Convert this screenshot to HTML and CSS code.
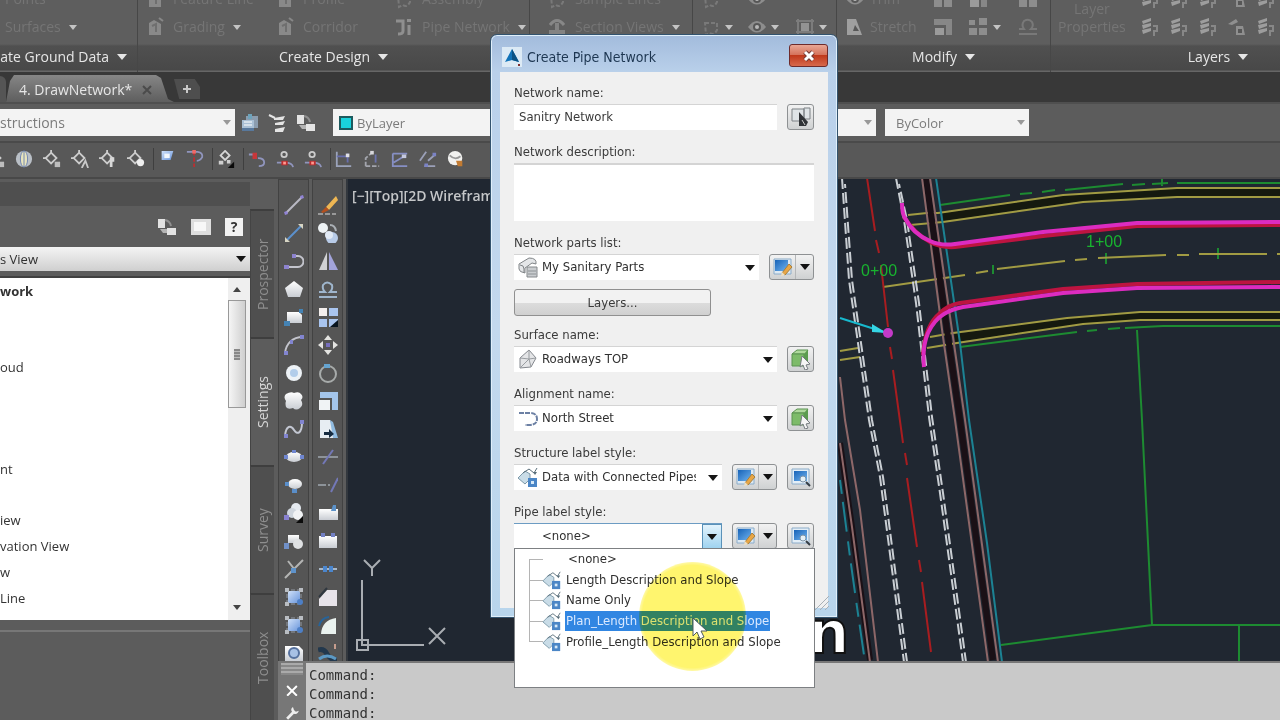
FILE: index.html
```html
<!DOCTYPE html>
<html lang="en">
<head>
<meta charset="utf-8">
<title>Create Pipe Network</title>
<link rel="stylesheet" href="styles.css">
</head>
<body>
<svg class="sprite" aria-hidden="true">
  <defs>
    <linearGradient id="pale" x1="0" y1="0" x2="0" y2="1"><stop offset="0" stop-color="#fff"/><stop offset="1" stop-color="#c9cdd3"/></linearGradient>
    <linearGradient id="sky" x1="0" y1="0" x2="1" y2="1"><stop offset="0" stop-color="#cfe0f8"/><stop offset="1" stop-color="#6a96dc"/></linearGradient>
    <linearGradient id="deep" x1="0" y1="0" x2="1" y2="1"><stop offset="0" stop-color="#1763b8"/><stop offset="1" stop-color="#6fb2ee"/></linearGradient>
  </defs>
  <symbol id="caret" viewBox="0 0 10 6"><path d="M0 0h10L5 6z" fill="currentColor"/></symbol>
  <symbol id="line" viewBox="0 0 20 20"><path d="M2 18 18 2" stroke="#b9b9c4" stroke-width="2"/><path d="M0 17l3-1 1 3-3 1zM16 1l3-1 1 3-3 1z" fill="#9184d6"/></symbol>
  <symbol id="xline" viewBox="0 0 20 20"><path d="M3 17 17 3" stroke="#5b91cd" stroke-width="2"/><path d="M1 14v5h5zM19 6V1h-5z" fill="#d7d5c4"/></symbol>
  <symbol id="pline" viewBox="0 0 20 20"><path d="M1 16h13a5 5 0 0 0 0-11h-3" fill="none" stroke="#c3c4cc" stroke-width="2"/><path d="M0 14h5v4H0zM8 3h4v4H8z" fill="#8d83cf"/></symbol>
  <symbol id="polygon" viewBox="0 0 20 20"><path d="M10 2l9 7-3 9H4L1 9z" fill="url(#pale)"/></symbol>
  <symbol id="rect" viewBox="0 0 20 20"><path d="M3 5h12l3 3v8H3z" fill="url(#pale)"/><path d="M0 14h6v5H0zM15 2h4v4h-4z" fill="#4583b4"/></symbol>
  <symbol id="arc" viewBox="0 0 20 20"><path d="M1 18C2 9 8 2 19 2" fill="none" stroke="#c3c4cc" stroke-width="2"/><path d="M0 16h4v4H0zM16 0h4v4h-4zM6 5h3v4H6z" fill="#8285d0"/></symbol>
  <symbol id="circle" viewBox="0 0 20 20"><circle cx="10" cy="10" r="8" fill="#edf2f6"/><circle cx="10" cy="10" r="4" fill="#b2cdea"/></symbol>
  <symbol id="cloud" viewBox="0 0 20 20"><path d="M2 3q5-3 8-1 5-2 7 1 3 3 0 6 3 5-1 8-4 3-7 0-5 2-7-1-1-4 0-6-3-4 0-7z" fill="url(#pale)"/></symbol>
  <symbol id="spline" viewBox="0 0 20 20"><path d="M1 17C2 6 7 6 10 11s8 4 8-8" fill="none" stroke="#c3c7d2" stroke-width="2"/><path d="M0 15h4v4H0zM16 1h4v4h-4z" fill="#8285d0"/></symbol>
  <symbol id="ellipse" viewBox="0 0 20 20"><ellipse cx="10" cy="10" rx="8" ry="5" fill="url(#pale)"/><path d="M0 8h4v4H0zM16 8h4v4h-4zM8 3h4v3H8z" fill="#6f86d0"/></symbol>
  <symbol id="earc" viewBox="0 0 20 20"><ellipse cx="11" cy="9" rx="7" ry="5" fill="url(#pale)"/><path d="M1 7h4v4H1zM8 14h5v4H8z" fill="#5a8ec9"/></symbol>
  <symbol id="insert" viewBox="0 0 20 20"><circle cx="12" cy="5" r="5" fill="#e4e9ef"/><circle cx="8" cy="10" r="5" fill="#cfd6de"/><circle cx="14" cy="12" r="5" fill="#f1f3f5"/><path d="M0 12h5v5H0z" fill="#8780d0"/><path d="M19 13v7h-7z" fill="#0b0b0b"/></symbol>
  <symbol id="block" viewBox="0 0 20 20"><path d="M4 4h11v8H4z" fill="url(#pale)"/><circle cx="14" cy="13" r="5" fill="#dfe1e3"/><path d="M0 12h5v6H0z" fill="#7090c8"/></symbol>
  <symbol id="point" viewBox="0 0 20 20"><path d="M1 19 19 1M4 2l7 9" stroke="#b4b5b4" stroke-width="2"/><path d="M7 9h5v5H7z" fill="#5e93cb"/></symbol>
  <symbol id="hatch" viewBox="0 0 20 20"><path d="M4 4h12v12H4z" fill="url(#sky)"/><path d="M3 1v18M17 1v18M1 3h18M1 17h18" stroke="#9299a3" stroke-width="1" stroke-dasharray="4 2"/><path d="M1 1h4v4H1zM15 1h4v4h-4zM1 15h4v4H1z" fill="#b9bdc2"/><circle cx="16" cy="15" r="3" fill="#4d7fc6"/></symbol>
  <symbol id="region" viewBox="0 0 20 20"><path d="M1 3h14l4 4v11H1z" fill="url(#pale)"/><circle cx="10" cy="10" r="5" fill="#a8c1e5" stroke="#56719e" stroke-width="2"/></symbol>
  <symbol id="pencil" viewBox="0 0 20 20"><path d="M8 12 18 1l2 4-9 10z" fill="#efb753"/><path d="M8 12l3 3-6 3-2-1z" fill="#b4501e"/><path d="M0 19h18" stroke="#999" stroke-width="2" stroke-dasharray="5 2"/></symbol>
  <symbol id="copy" viewBox="0 0 20 20"><circle cx="5" cy="5" r="5" fill="#eef2f4"/><circle cx="14" cy="15" r="6" fill="#b8cbe7"/><circle cx="11" cy="12" r="4" fill="#e1e9f4"/><path d="M12 2q5 0 6 6" fill="none" stroke="#abb0b5" stroke-width="2"/></symbol>
  <symbol id="mirror" viewBox="0 0 20 20"><path d="M9 1v18H1z" fill="#d1d2d4"/><path d="M11 1v18h9z" fill="#a3a4da"/></symbol>
  <symbol id="offset" viewBox="0 0 20 20"><path d="M1 13h6Q4 10 5 6q4-5 9 0 1 4-2 7h7M1 18h18" fill="none" stroke="#9fb6cd" stroke-width="2"/></symbol>
  <symbol id="array" viewBox="0 0 20 20"><path d="M1 1h8v8H1z" fill="#f4efed"/><path d="M11 1h9v8h-9zM1 12h8v8H1zM11 12h9v8h-9z" fill="#a9c5ef"/><path d="M20 13v7h-8z" fill="#091520"/></symbol>
  <symbol id="move" viewBox="0 0 20 20"><path d="M10 0l4 5H6zM10 20l4-5H6zM0 10l5-4v8zM20 10l-5-4v8z" fill="#e4e4e1"/><path d="M8 8h4v4H8z" fill="#776fbd"/></symbol>
  <symbol id="rotate" viewBox="0 0 20 20"><circle cx="10" cy="11" r="8" fill="none" stroke="#a7abaa" stroke-width="2"/><path d="M6 1h6v4H6z" fill="#65a4d0"/></symbol>
  <symbol id="scale" viewBox="0 0 20 20"><path d="M2 1h18v18h-6V7H2z" fill="#a4c5ea"/><path d="M1 9h11v10H1z" fill="#f0f3f5"/></symbol>
  <symbol id="stretch" viewBox="0 0 20 20"><path d="M2 1h10l7 18H2z" fill="#e7edf2"/><path d="M12 1l3 2 5 16h-5z" fill="#91bce1"/><path d="M6 13h5v-3l5 5-5 4v-3H6z" fill="#162b40"/></symbol>
  <symbol id="trim" viewBox="0 0 20 20"><path d="M0 10h20" stroke="#8d9399" stroke-width="2"/><path d="M5 17 15 3" stroke="#7378b7" stroke-width="2"/></symbol>
  <symbol id="extend" viewBox="0 0 20 20"><path d="M0 10h12" stroke="#8d9399" stroke-width="2" stroke-dasharray="8 2"/><path d="M13 17 20 3" stroke="#7378b7" stroke-width="2"/></symbol>
  <symbol id="break1" viewBox="0 0 20 20"><path d="M1 6h19v11H1z" fill="url(#pale)"/><path d="M15 2h3v6h-5z" fill="#5c92c9"/></symbol>
  <symbol id="break2" viewBox="0 0 20 20"><path d="M1 5h18v12H1z" fill="url(#pale)"/><path d="M3 2h4v4H3zM13 2h4v4h-4z" fill="#7381c4"/></symbol>
  <symbol id="join" viewBox="0 0 20 20"><path d="M1 10h18" stroke="#a9b8c8" stroke-width="2"/><path d="M5 7h4v6H5zM11 7h4v6h-4z" fill="#4b86cd"/></symbol>
  <symbol id="chamfer" viewBox="0 0 20 20"><path d="M9 3h10v16H1v-7z" fill="#e7e3e9"/><path d="M1 10 9 1" stroke="#303840" stroke-width="2"/></symbol>
  <symbol id="fillet" viewBox="0 0 20 20"><path d="M18 3v16H3Q4 5 18 3z" fill="#eaf2ef"/><path d="M1 11Q3 3 11 2" fill="none" stroke="#27649a" stroke-width="2"/></symbol>
  <symbol id="blend" viewBox="0 0 20 20"><path d="M0 7q6-2 9 4t10 6" fill="none" stroke="#22384d" stroke-width="5"/><path d="M1 16q8-6 17 0" fill="none" stroke="#5c99c4" stroke-width="3"/><path d="M17 1v5" stroke="#c69d8d" stroke-width="2"/></symbol>
  <symbol id="diamond" viewBox="0 0 20 20"><path d="M9 3l6 6-6 6-6-6z" fill="none" stroke="#cdcdcd" stroke-width="2"/><path d="M9 0v3M0 9h3" stroke="#cdcdcd" stroke-width="2"/></symbol>
  <symbol id="dia-sq" viewBox="0 0 20 20"><use href="#diamond"/><path d="M13 13h6v6h-6z" fill="#bdbdbd"/></symbol>
  <symbol id="dia-a" viewBox="0 0 20 20"><use href="#diamond"/><path d="M12 20l4-8 3 8" fill="none" stroke="#c8c8c8" stroke-width="2"/></symbol>
  <symbol id="dia-x" viewBox="0 0 20 20"><use href="#diamond"/><path d="M12 8h5v5h-2v6h-3z" fill="#d8d8d8"/></symbol>
  <symbol id="dia-o" viewBox="0 0 20 20"><use href="#diamond"/><circle cx="15" cy="14" r="4" fill="#efefef"/></symbol>
  <symbol id="dia-k" viewBox="0 0 20 20"><path d="M9 1l5 5-5 5-5-5z" fill="none" stroke="#d6d6d6" stroke-width="2"/><path d="M2 12h5v4H2zM11 11h4v4h-4z" fill="#cfcfcf"/><path d="M19 13v7h-7z" fill="#090909"/></symbol>
  <symbol id="globe" viewBox="0 0 20 20"><circle cx="10" cy="10" r="9" fill="#b9bfc6"/><ellipse cx="10" cy="10" rx="4" ry="9" fill="#e8e4bd" stroke="#6a7fb0"/><path d="M10 1v18" stroke="#6a7fb0"/></symbol>
  <symbol id="flag" viewBox="0 0 20 20"><path d="M4 1h13l-3 10H4z" fill="url(#sky)"/><path d="M7 4h6v5H7z" fill="#f1f6fb"/></symbol>
  <symbol id="curve-r" viewBox="0 0 20 20"><path d="M1 2h12q6 1 5 6-2 4-6 4" fill="none" stroke="#9095bd" stroke-width="2"/><path d="M9 1v18" stroke="#ba2f32" stroke-width="2" stroke-dasharray="5 2"/><path d="M7 0h4v4H7z" fill="#f06a66"/></symbol>
  <symbol id="curve-s" viewBox="0 0 20 20"><path d="M1 5h8M11 9q7 0 7 5 0 4-6 4" fill="none" stroke="#9095bd" stroke-width="2"/><path d="M5 3h5v7H5z" fill="#c8373a"/></symbol>
  <symbol id="curve-o" viewBox="0 0 20 20"><circle cx="9" cy="5" r="3" fill="none" stroke="#ccc" stroke-width="2"/><path d="M1 14h9q8 0 9 5" fill="none" stroke="#9095bd" stroke-width="2"/><path d="M6 12h7v5H6z" fill="#b92e30"/><path d="M8 13h3v3H8z" fill="#ff9a90"/></symbol>
  <symbol id="axis" viewBox="0 0 20 20"><path d="M2 2v16h16" fill="none" stroke="#9ba3bb" stroke-width="2"/><path d="M2 7h12M14 4v10" stroke="#686fae" stroke-width="2"/><path d="M12 4h4v4h-4z" fill="#e1e1e6"/></symbol>
  <symbol id="axis2" viewBox="0 0 20 20"><path d="M3 18V9l8-7M3 18h15" fill="none" stroke="#a3a5ad" stroke-width="2" stroke-dasharray="5 2"/><path d="M14 5v9" stroke="#6b73ae" stroke-width="2"/><path d="M8 1h4v4H8z" fill="#d8d8dc"/></symbol>
  <symbol id="axis3" viewBox="0 0 20 20"><path d="M2 4v14h16M2 4h16M3 14 16 6" fill="none" stroke="#868fc4" stroke-width="2"/><path d="M12 5h5v4h-5z" fill="#c5c9df"/></symbol>
  <symbol id="axis4" viewBox="0 0 20 20"><path d="M1 12 8 2M6 18h12M10 12l8-7" fill="none" stroke="#9ba0b8" stroke-width="2"/><path d="M6 15h4v4H6zM15 3h4v4h-4z" fill="#7b83c5"/></symbol>
  <symbol id="ball" viewBox="0 0 20 20"><circle cx="9" cy="9" r="8" fill="#f1f1ef"/><path d="M3 6q6 6 12 1" fill="none" stroke="#999" stroke-width="2"/><path d="M10 12h7v6h-5z" fill="#c27b32"/></symbol>
  <symbol id="sheets" viewBox="0 0 20 20"><path d="M6 3h12v12H6z" fill="#8b9cae"/><path d="M2 7h12v11H2z" fill="#a9bfd4"/><path d="M4 9h8M4 12h8" stroke="#d5e0ea" stroke-width="2"/><path d="M2 15h12v3H2z" fill="#58789c"/><path d="M8 1h4v5H8z" fill="#6ea3bb"/></symbol>
  <symbol id="stack" viewBox="0 0 20 20"><path d="M6 5l11-2-2 4H6zM7 10l10-2-2 4H7zM7 16l10-2-2 5H7z" fill="currentColor"/><path d="M1 2l6 3" stroke="currentColor" stroke-width="2"/></symbol>
  <symbol id="stack2" viewBox="0 0 20 20"><path d="M1 2h7v9H1zM10 11h9v7h-9z" fill="currentColor"/><path d="M8 3q5 1 6 6" fill="none" stroke="#8f8f8f" stroke-width="2"/><path d="M3 12h7v4H6z" fill="#b4b4b4"/></symbol>
  <symbol id="grade" viewBox="0 0 20 20"><path d="M4 6l5-3 7 4v11H4z" fill="#9c9c9c"/><path d="M14 1l4 3" stroke="#999" stroke-width="2"/><path d="M7 9l4-2v8" fill="none" stroke="#777" stroke-width="2"/></symbol>
  <symbol id="pipes" viewBox="0 0 20 20"><path d="M2 4h7v10q0 3-5 3M15 8v10" fill="none" stroke="#a5a5a5" stroke-width="3"/><path d="M13 2h4v3h-4z" fill="#a5a5a5"/></symbol>
  <symbol id="views" viewBox="0 0 20 20"><path d="M3 8q7-9 14 0" fill="none" stroke="#999" stroke-width="3"/><path d="M2 13h16v5H2zM8 6h4v8H8z" fill="#939393"/></symbol>
  <symbol id="lasso" viewBox="0 0 20 20"><path d="M4 6h12v7q-3 6-7 3l-4 2z" fill="none" stroke="#858585" stroke-width="2" stroke-dasharray="4 2"/></symbol>
  <symbol id="eye" viewBox="0 0 20 20"><path d="M1 10q9-12 18 0-9 11-18 0z" fill="#a2a2a2"/><circle cx="10" cy="10" r="4" fill="#555"/><circle cx="10" cy="10" r="2" fill="#ddd"/></symbol>
  <symbol id="frame" viewBox="0 0 20 20"><path d="M3 2v15M17 2v15M1 4h18M1 15h18" stroke="#8a8a8a" stroke-width="2"/><path d="M6 6h8v8H6z" fill="#aaa"/></symbol>
  <symbol id="g-stretch" viewBox="0 0 20 20"><path d="M2 2h9l6 16H2z" fill="#bbb"/><path d="M10 8l4 6h-6z" fill="#555"/></symbol>
  <symbol id="g-scale" viewBox="0 0 20 20"><path d="M1 2h18v16h-6V8H1z" fill="#999"/><path d="M2 11h9v7H2z" fill="#b5b5b5"/></symbol>
  <symbol id="g-array" viewBox="0 0 20 20"><path d="M1 3h6v5H1zM11 1h8v7h-8zM1 11h8v7H1zM11 11h8v7h-8z" fill="#a2a2a2"/></symbol>
  <symbol id="g-offset" viewBox="0 0 20 20"><path d="M1 12h5Q3 8 6 4q5-3 8 1 2 4-1 7h6M1 17h18" fill="none" stroke="#858585" stroke-width="2"/></symbol>
  <symbol id="g-layer" viewBox="0 0 20 20"><path d="M2 4l9-3v3L3 7zM2 8l9-2v3l-8 3zM2 13l9-2v3l-8 3z" fill="#b8b8b8"/><path d="M13 9h4v5h-3v5" fill="none" stroke="#999" stroke-width="2"/></symbol>
  <symbol id="g-layer2" viewBox="0 0 20 20"><path d="M1 7l8-5 2 3-6 3zM9 9h7l2 9H9z" fill="#a5a5a5"/><path d="M11 12h4v4h-4z" fill="#555"/></symbol>
  <symbol id="label" viewBox="0 0 22 22"><path d="M1 12 8 5l5 3v5l-5 5z" fill="#c9dce7" stroke="#7c99a9" stroke-width="1"/><path d="M6 7l6-4 5 4 3-5" fill="none" stroke="#596e7a" stroke-width="1"/><path d="M16 6h4l-2 3z" fill="#596e7a"/><path d="M11 12h9v9h-9z" fill="#4b86c6"/><path d="M14 15h3v3h-3z" fill="#d6e9f7"/></symbol>
  <symbol id="parts" viewBox="0 0 22 22"><path d="M2 8l10-6q8 0 7 6l-4-1-7 5v5q-6-1-6-4z" fill="#e4e6e8" stroke="#808487" stroke-width="1"/><path d="M3 9q4 0 4 4v4" fill="none" stroke="#808487"/><path d="M10 11h10v10H10z" fill="#c9cccf" stroke="#85898c"/><path d="M11 15h8M11 18h8" stroke="#8d9295"/></symbol>
  <symbol id="surface" viewBox="0 0 22 22"><path d="M3 10 12 2l7 8-5 9-11 1z" fill="#e4e5e7" stroke="#84888e" stroke-width="1"/><path d="M12 2v9l7-1M12 11l-9 9M3 10l9 1 2 8" fill="none" stroke="#999da1"/></symbol>
  <symbol id="align" viewBox="0 0 22 22"><path d="M2 6h11q7 0 7 6t-8 6H8" fill="none" stroke="#6c80a4" stroke-width="2" stroke-dasharray="5 1"/></symbol>
  <symbol id="pick" viewBox="0 0 22 22"><path d="M2 3h12v12H2zM14 2h6v11h-6z" fill="#dfe4e7" stroke="#7c8185"/><path d="M9 6l9 10-2 4H9z" fill="#303337"/><path d="M12 14l3 5" stroke="#c8c8c8"/></symbol>
  <symbol id="cube" viewBox="0 0 22 22"><path d="M2 6l5-4h11l-3 4z" fill="#afd99c" stroke="#5b9350"/><path d="M2 6h12v12H2z" fill="#7dbb69" stroke="#5b9350"/><path d="M14 6l4-4v11l-4 4z" fill="#5c9c4f"/><path d="M12 8l8 8-4 1 2 4-3 1-2-5-3 2z" fill="#f5f5f5" stroke="#757b80"/></symbol>
  <symbol id="edit" viewBox="0 0 22 22"><path d="M2 3h17v15H2z" fill="#dde9f3" stroke="#8bacc9"/><path d="M3 4h13v11H3z" fill="url(#deep)"/><path d="M10 17l7-9 3 3-7 8z" fill="#e8a646" stroke="#a9803c"/><path d="M9 20l1-4 3 3z" fill="#f2dfbd"/></symbol>
  <symbol id="view" viewBox="0 0 22 22"><path d="M2 3h17v15H2z" fill="#e3eef7" stroke="#8bacc9"/><path d="M4 5h13v10H4z" fill="url(#deep)"/><circle cx="13" cy="13" r="3" fill="#e6f0f5" stroke="#7c93a6" stroke-width="1"/><path d="M16 16l4 4" stroke="#343c43" stroke-width="2"/></symbol>
</svg>

<header class="ribbon">
  <section class="panel first">
    <div class="rows">
      <div class="cmd">Points</div>
      <div class="cmd">Surfaces <svg class="caret s"><use href="#caret"/></svg></div>
    </div>
    <h2>Create Ground Data <svg class="caret"><use href="#caret"/></svg></h2>
  </section>
  <section class="panel design">
    <div class="rows">
      <div class="cmd"><svg class="i"><use href="#grade"/></svg>Feature Line</div>
      <div class="cmd"><svg class="i"><use href="#grade"/></svg>Profile</div>
      <div class="cmd"><svg class="i"><use href="#lasso"/></svg>Assembly</div>
      <div class="cmd"><svg class="i"><use href="#grade"/></svg>Grading <svg class="caret s"><use href="#caret"/></svg></div>
      <div class="cmd"><svg class="i"><use href="#grade"/></svg>Corridor</div>
      <div class="cmd"><svg class="i"><use href="#pipes"/></svg>Pipe Network <svg class="caret s"><use href="#caret"/></svg></div>
    </div>
    <h2>Create Design <svg class="caret"><use href="#caret"/></svg></h2>
  </section>
  <section class="panel views">
    <div class="rows">
      <div class="cmd"><svg class="i"><use href="#lasso"/></svg>Sample Lines</div>
      <div class="cmd"><svg class="i"><use href="#views"/></svg>Section Views <svg class="caret s"><use href="#caret"/></svg></div>
    </div>
  </section>
  <section class="panel draw">
    <div class="rows">
      <div class="cmd"><svg class="i"><use href="#lasso"/></svg></div>
      <div class="cmd"><svg class="i"><use href="#eye"/></svg></div>
      <div class="cmd"></div>
      <div class="cmd"><svg class="i"><use href="#lasso"/></svg><svg class="caret s"><use href="#caret"/></svg></div>
      <div class="cmd"><svg class="i"><use href="#eye"/></svg><svg class="caret s"><use href="#caret"/></svg></div>
      <div class="cmd"><svg class="i"><use href="#frame"/></svg><svg class="caret s"><use href="#caret"/></svg></div>
    </div>
  </section>
  <section class="panel modify">
    <div class="rows">
      <div class="cmd"><svg class="i"><use href="#eye"/></svg>Trim</div>
      <div class="cmd"><svg class="i"><use href="#g-array"/></svg></div>
      <div class="cmd"><svg class="i"><use href="#g-scale"/></svg></div>
      <div class="cmd"><svg class="i"><use href="#g-array"/></svg></div>
      <div class="cmd"><svg class="i"><use href="#g-stretch"/></svg>Stretch</div>
      <div class="cmd"><svg class="i"><use href="#g-scale"/></svg></div>
      <div class="cmd"><svg class="i"><use href="#g-array"/></svg><svg class="caret s"><use href="#caret"/></svg></div>
      <div class="cmd"><svg class="i"><use href="#g-offset"/></svg></div>
    </div>
    <h2>Modify <svg class="caret"><use href="#caret"/></svg></h2>
  </section>
  <section class="panel layers">
    <div class="rows">
      <div class="cmd props">Layer<br>Properties</div>
      <div class="grid5">
        <svg class="i"><use href="#g-layer"/></svg><svg class="i"><use href="#g-layer"/></svg><svg class="i"><use href="#g-layer"/></svg><svg class="i"><use href="#g-layer2"/></svg><svg class="i"><use href="#g-layer"/></svg>
        <svg class="i"><use href="#g-layer"/></svg><svg class="i"><use href="#g-layer"/></svg><svg class="i"><use href="#g-layer"/></svg><svg class="i"><use href="#g-layer2"/></svg><svg class="i"><use href="#g-layer"/></svg>
      </div>
    </div>
    <h2>Layers <svg class="caret"><use href="#caret"/></svg></h2>
  </section>
</header>

<nav class="filetabs">
  <span class="prevtab"></span>
  <div class="filetab"><span>4. DrawNetwork*</span><button class="plain" aria-label="Close drawing"><svg width="10" height="10" viewBox="0 0 10 10"><path d="M1 1l8 8M9 1 1 9" stroke="#4b4b4b" stroke-width="2"/></svg></button></div>
  <button class="newtab" aria-label="New drawing"><svg width="8" height="8" viewBox="0 0 8 8"><path d="M4 0v8M0 4h8" stroke="#c8c8c8" stroke-width="2"/></svg></button>
</nav>

<div class="propbar">
  <div class="combo dim layer"><select aria-label="Layer"><option>structions</option></select><svg class="caret s"><use href="#caret"/></svg></div>
  <div class="propicons">
    <svg class="i"><use href="#sheets"/></svg><svg class="i"><use href="#stack"/></svg><svg class="i"><use href="#stack2"/></svg>
  </div>
  <div class="combo dim color"><span class="swatch"></span><select aria-label="Object color"><option>ByLayer</option></select><svg class="caret s"><use href="#caret"/></svg></div>
  <div class="combo dim weight"><select aria-label="Lineweight"><option></option></select><svg class="caret s"><use href="#caret"/></svg></div>
  <div class="combo dim plot"><select aria-label="Plot style"><option>ByColor</option></select><svg class="caret s"><use href="#caret"/></svg></div>
</div>

<div class="snapbar">
  <div class="group start">
    <svg class="i"><use href="#dia-sq"/></svg><svg class="i"><use href="#globe"/></svg><svg class="i"><use href="#dia-sq"/></svg><svg class="i"><use href="#dia-a"/></svg><svg class="i"><use href="#dia-x"/></svg><svg class="i"><use href="#dia-o"/></svg>
  </div>
  <div class="group"><svg class="i"><use href="#flag"/></svg><svg class="i"><use href="#curve-r"/></svg></div>
  <div class="group"><svg class="i"><use href="#dia-k"/></svg></div>
  <div class="group"><svg class="i"><use href="#curve-s"/></svg><svg class="i"><use href="#curve-o"/></svg><svg class="i"><use href="#curve-o"/></svg></div>
  <div class="group"><svg class="i"><use href="#axis"/></svg><svg class="i"><use href="#axis2"/></svg><svg class="i"><use href="#axis3"/></svg><svg class="i"><use href="#axis4"/></svg><svg class="i"><use href="#ball"/></svg></div>
</div>

<main class="work">
  <aside class="palette">
    <div class="palhead"></div>
    <div class="paltools">
      <svg class="i"><use href="#stack2"/></svg>
      <svg class="i" viewBox="0 0 20 20"><path d="M0 2h20v16H0z" fill="#dedede"/><path d="M3 5h12v9H3z" fill="#f7f7f7"/></svg>
      <button class="help">?</button>
    </div>
    <div class="combo viewsel"><select aria-label="Settings view"><option>s View</option></select><svg class="caret"><use href="#caret"/></svg></div>
    <div class="tree">
      <ul>
        <li><b>work</b></li><li></li><li></li><li>oud</li><li></li><li></li><li></li><li>nt</li><li></li><li>iew</li><li>vation View</li><li>w</li><li>Line</li>
      </ul>
      <div class="scroll"><svg class="caret s up"><use href="#caret"/></svg><div class="thumb"><i></i></div><svg class="caret s"><use href="#caret"/></svg></div>
    </div>
    <div class="palfoot"></div>
  </aside>
  <nav class="vtabs">
    <button>Prospector</button><button class="on">Settings</button><button>Survey</button><button>Toolbox</button>
  </nav>
  <div class="right">
    <div class="stage">
      <div class="toolcol">
        <svg class="i"><use href="#line"/></svg><svg class="i"><use href="#xline"/></svg><svg class="i"><use href="#pline"/></svg><svg class="i"><use href="#polygon"/></svg><svg class="i"><use href="#rect"/></svg><svg class="i"><use href="#arc"/></svg><svg class="i"><use href="#circle"/></svg><svg class="i"><use href="#cloud"/></svg><svg class="i"><use href="#spline"/></svg><svg class="i"><use href="#ellipse"/></svg><svg class="i"><use href="#earc"/></svg><svg class="i"><use href="#insert"/></svg><svg class="i"><use href="#block"/></svg><svg class="i"><use href="#point"/></svg><svg class="i"><use href="#hatch"/></svg><svg class="i"><use href="#hatch"/></svg><svg class="i"><use href="#region"/></svg>
      </div>
      <div class="toolcol">
        <svg class="i"><use href="#pencil"/></svg><svg class="i"><use href="#copy"/></svg><svg class="i"><use href="#mirror"/></svg><svg class="i"><use href="#offset"/></svg><svg class="i"><use href="#array"/></svg><svg class="i"><use href="#move"/></svg><svg class="i"><use href="#rotate"/></svg><svg class="i"><use href="#scale"/></svg><svg class="i"><use href="#stretch"/></svg><svg class="i"><use href="#trim"/></svg><svg class="i"><use href="#extend"/></svg><svg class="i"><use href="#break1"/></svg><svg class="i"><use href="#break2"/></svg><svg class="i"><use href="#join"/></svg><svg class="i"><use href="#chamfer"/></svg><svg class="i"><use href="#fillet"/></svg><svg class="i"><use href="#blend"/></svg>
      </div>
      <div class="canvas">
        <svg class="drawing">
          <g transform="translate(-348 -179)" fill="none">
            <g stroke="#1d8b31" stroke-width="2">
              <path d="M940 205 1010 195M1020 194l12-1M1042 192l13-2M1065 190l58-6M1132 185l13-1M1152 184l16-1M1177 183h400M1162 178v8"/>
              <path d="M960 347 1077 332M1087 331l10-1M1108 329l12-1M1125 328l38-2h400"/>
              <path d="M1137 330l5 90 10 205h400M1239 625v60M1152 625l-151 20"/>
              <path d="M993 265v9M1106 253v11M1218 248v11"/>
            </g>
            <g stroke="#15190f" stroke-width="8">
              <path d="M943 217 1075 198 1177 192h400M955 338 1075 321 1140 316h400"/>
            </g>
            <g stroke="#a19b43" stroke-width="2">
              <path d="M908 215l19-2 11 0 125-18 114-7h400M910 225l33-3 140-20 94-5h400"/>
              <path d="M930 337l23-4 114-15 73-6h440M927 348l30-5 126-19 57-4h440"/>
              <path d="M840 351l18-3M840 360l20-3"/>
              <path d="M883 287l82-12M976 273l12-2M997 269l68-8M1075 260l12-1M1098 258l68-3M1177 255h12M1199 254h68M1277 254h12M1300 254h70"/>
            </g>
            <path d="M840 443l12 84 18 133M926 178l22 159 12 83 33 240" stroke="#1a1016" stroke-width="6"/>
            <g stroke="#8d6768" stroke-width="2">
              <path d="M922 178l21 159 12 83 33 242M930 178l23 159 12 83 33 242M840 377l5 43 15 90 18 152M840 443l12 84 18 135"/>
            </g>
            <path d="M936 178l24 165 9 77 18 123 15 119" stroke="#1c8293" stroke-width="2"/>
            <path d="M840 480l10 77 7 50 8 55" stroke="#1c8293" stroke-width="2" stroke-dasharray="14 8 30 10"/>
            <path d="M867 178l8 53M876 240l3 13M881 265l7 62M890 347l2 12M893 370l10 73M905 453l2 12M907 478l10 69M919 560l2 12M922 582l9 70" stroke="#a81d20" stroke-width="2"/>
            <g stroke="#c9ced3" stroke-width="2" stroke-dasharray="11 4">
              <path d="M842 178l7 102 9 63 11 77 11 57 24 185M896 178l8 42 12 83 13 114 11 76 23 169"/>
              <path d="M845 184l7 96 9 63 11 77 11 57 24 185M899 184l8 36 12 83 13 114 11 76 23 169" stroke-dashoffset="7"/>
            </g>
            <g stroke-width="4" stroke="#bd1440">
              <path d="M904 217q10 16 26 25 11 6 25 5l88-11 94-10 143-1h300M923 355q2-30 17-42 8-8 20-10l103-14 74-5 143-2h300"/>
            </g>
            <g stroke-width="4" stroke="#dc2cc0">
              <path d="M902 203q0 11 3 15 8 16 25 23 11 5 25 3l88-12 94-9 143-1h300M924 367q-2-20 4-34 6-13 16-19 8-5 19-7l100-14 74-5 143-1h300"/>
            </g>
            <path d="M840 318l44 14" stroke="#17b9ce" stroke-width="2"/><path d="M872 324l15 9-15-1z" fill="#35d5e4"/>
            <circle cx="888" cy="333" r="5" fill="#c43ac8"/>
            <g fill="#18b32f" class="station"><text x="1086" y="247">1+00</text><text x="861" y="276">0+00</text></g>
            <g stroke="#a9adb2" stroke-width="2">
              <path d="M362 580v65h62M357 640h11v10h-11zM364 560l8 8 8-8M372 568v8M429 628l16 16M445 628l-16 16"/>
            </g>
            <text class="caption" x="808" y="653">n</text>
          </g>
        </svg>
        <p class="viewlabel">[−][Top][2D Wireframe]</p>
      </div>
    </div>
    <div class="cmdline">
      <div class="cmdgrip"><i></i>
        <svg width="12" height="12" viewBox="0 0 12 12"><path d="M1 1l10 10M11 1 1 11" stroke="#fff" stroke-width="2"/></svg>
        <svg width="14" height="14" viewBox="0 0 14 14"><path d="M8 1q-3 2-1 5L1 12l2 2 6-6q4 1 5-3l-3 1-2-2z" fill="#eee"/></svg>
      </div>
      <pre>Command:
Command:
Command:</pre>
    </div>
  </div>
</main>

<form class="dialog" onsubmit="return false">
  <div class="titlebar">
    <svg class="logo" width="20" height="20" viewBox="0 0 20 20"><path d="M0 0h20v20H0z" fill="#dceaf5"/><path d="M10 2 3 15l7-2 7 2z" fill="#1173b8"/><path d="M10 2v11l7 2z" fill="#0b5285"/><path d="M16 17h2v2h-2z" fill="#803030"/></svg>
    <h1>Create Pipe Network</h1>
    <button class="close" type="button" aria-label="Close"><svg width="14" height="12" viewBox="0 0 14 12"><path d="M3 2l8 8M11 2 3 10" stroke="#743a35" stroke-width="5"/><path d="M3 2l8 8M11 2 3 10" stroke="#fff" stroke-width="3"/></svg></button>
  </div>
  <div class="body">
    <div class="field"><label for="nname">Network name:</label>
      <div class="row"><input id="nname" type="text" value="Sanitry Network"><button class="sq" type="button" aria-label="Pick name"><svg><use href="#pick"/></svg></button></div></div>
    <div class="field"><label for="ndesc">Network description:</label><textarea id="ndesc"></textarea></div>
    <div class="field parts"><label for="parts-list">Network parts list:</label>
      <div class="row"><div class="combo"><svg class="lead"><use href="#parts"/></svg><select id="parts-list"><option>My Sanitary Parts</option></select><svg class="caret"><use href="#caret"/></svg></div>
        <div class="split"><button type="button" aria-label="Edit parts list"><svg><use href="#edit"/></svg></button><button type="button" aria-label="More"><svg class="caret"><use href="#caret"/></svg></button></div></div>
      <button class="wide" type="button">Layers...</button></div>
    <div class="field"><label for="surf">Surface name:</label>
      <div class="row"><div class="combo"><svg class="lead"><use href="#surface"/></svg><select id="surf"><option>Roadways TOP</option></select><svg class="caret"><use href="#caret"/></svg></div>
        <button class="sq" type="button" aria-label="Pick surface"><svg><use href="#cube"/></svg></button></div></div>
    <div class="field"><label for="alig">Alignment name:</label>
      <div class="row"><div class="combo"><svg class="lead"><use href="#align"/></svg><select id="alig"><option>North Street</option></select><svg class="caret"><use href="#caret"/></svg></div>
        <button class="sq" type="button" aria-label="Pick alignment"><svg><use href="#cube"/></svg></button></div></div>
    <div class="field"><label for="struct">Structure label style:</label>
      <div class="row"><div class="combo"><svg class="lead"><use href="#label"/></svg><select id="struct"><option>Data with Connected Pipes</option></select><svg class="caret"><use href="#caret"/></svg></div>
        <div class="split"><button type="button" aria-label="Edit style"><svg><use href="#edit"/></svg></button><button type="button" aria-label="More"><svg class="caret"><use href="#caret"/></svg></button></div>
        <button class="sq" type="button" aria-label="View style"><svg><use href="#view"/></svg></button></div></div>
    <div class="field"><label for="pipe">Pipe label style:</label>
      <div class="row"><div class="combo open"><select id="pipe"><option>&lt;none&gt;</option></select><span class="arrow"><svg class="caret"><use href="#caret"/></svg></span></div>
        <div class="split"><button type="button" aria-label="Edit style"><svg><use href="#edit"/></svg></button><button type="button" aria-label="More"><svg class="caret"><use href="#caret"/></svg></button></div>
        <button class="sq" type="button" aria-label="View style"><svg><use href="#view"/></svg></button>
        <ul class="menu" role="listbox" aria-label="Pipe label style">
          <li role="option" class="none"><span>&lt;none&gt;</span></li>
          <li role="option"><svg><use href="#label"/></svg><span>Length Description and Slope</span></li>
          <li role="option"><svg><use href="#label"/></svg><span>Name Only</span></li>
          <li role="option" aria-selected="true"><svg><use href="#label"/></svg><span>Plan_Length Description and Slope</span></li>
          <li role="option"><svg><use href="#label"/></svg><span>Profile_Length Description and Slope</span></li>
        </ul>
      </div></div>
  </div>
  <svg class="grip" width="14" height="14" viewBox="0 0 14 14"><path d="M0 14 14 0M5 14l9-9M10 14l4-4" stroke="#a9b0b6" stroke-width="1"/></svg>
</form>

<div class="halo"></div>
<svg class="pointer" width="16" height="24" viewBox="0 0 16 24"><path d="M1 1v18l4-4 3 7 4-2-3-6h6z" fill="#fff" stroke="#4c5a5c" stroke-width="1"/></svg>
</body>
</html>
```
FILE: styles.css
```css
* { box-sizing: border-box; }
body {
  margin: 0;
  height: 100vh;
  position: relative;
  display: flex;
  flex-direction: column;
  overflow: hidden;
  background: #5c5c5c;
  color: #e6e6e6;
  font: 14px/20px "Open Sans", "Noto Sans", sans-serif;
}
h1, h2, p, ul, pre { margin: 0; padding: 0; font: inherit; }
ul { list-style: none; }
button, input, select, textarea { font: inherit; color: inherit; border-radius: 0; padding: 0; margin: 0; }
.sprite { position: absolute; width: 0; height: 0; }
.i { width: 20px; height: 20px; flex: none; }
.caret { width: 10px; height: 6px; flex: none; }
.caret.s { width: 8px; height: 5px; }
.plain { border: 0; background: none; display: flex; }

/* Ribbon */
.ribbon {
  flex: none;
  height: 72px;
  display: grid;
  grid-template-columns: 138fr 392fr 163fr 144fr 214fr 229fr;
  overflow: hidden;
  background: linear-gradient(#5e5e5e 0 44px, #505050 46px, #484848 70px, #666 71px);
}
.ribbon .i { opacity: .7; }
.panel { min-width: 0; display: flex; flex-direction: column; border-right: 1px solid #474747; }
.rows { display: grid; grid-auto-rows: 28px; margin-top: -15px; height: 60px; }
.cmd { display: flex; align-items: center; gap: 8px; color: #757575; white-space: nowrap; }
.cmd .caret { color: #c4c4c4; }
.panel h2 { height: 26px; padding-bottom: 3px; display: flex; align-items: center; justify-content: center; gap: 8px; white-space: nowrap; }
.first .rows { padding-left: 5px; }
.first h2 { justify-content: flex-end; padding-right: 10px; }
.design .rows { grid-template-columns: 130px 119px auto; padding-left: 7px; }
.views .rows { padding-left: 17px; }
.draw .rows { grid-template-columns: 46px 48px auto; padding-left: 8px; }
.draw .cmd { gap: 4px; }
.modify .rows { grid-template-columns: 88px 35px 50px auto; padding-left: 8px; }
.modify .cmd { gap: 5px; }
.layers { border: 0; }
.layers .rows { grid-template-columns: 82px auto; padding-left: 7px; grid-template-rows: 56px; }
.props { padding-top: 10px; line-height: 18px; text-align: center; }
.grid5 { display: grid; grid-template-columns: repeat(5, 29px); align-items: center; }
.layers h2 { margin-left: 105px; }

/* Drawing tabs */
.filetabs { flex: none; height: 32px; display: flex; align-items: flex-end; background: #383838; border-bottom: 2px solid #4f4f4f; }
.prevtab { width: 6px; height: 26px; background: #555; border-radius: 0 6px 0 0; }
.filetab {
  height: 27px; width: 168px; padding: 2px 22px 0 13px; margin-left: 0;
  display: flex; align-items: center; justify-content: space-between;
  background: linear-gradient(#868686, #5e5e5e);
  clip-path: polygon(0 100%, 4px 6px, 8px 0, 150px 0, 155px 3px, 162px 24px, 168px 100%);
}
.newtab { width: 26px; height: 20px; margin-bottom: 3px; display: flex; align-items: center; justify-content: center; border: 0; background: #4e4e4e; clip-path: polygon(0 0, 80% 0, 100% 40%, 100% 100%, 20% 100%); }

/* Combo boxes */
.combo { position: relative; display: flex; background: #fff; color: #303030; }
.combo select { appearance: none; border: 0; background: none; width: 100%; padding: 0 24px 0 0; }
.combo > .caret { position: absolute; right: 4px; top: calc(50% - 3px); color: #151515; pointer-events: none; }
.dim { height: 27px; background: #f3f3f3; color: #7b7b7b; font-size: 13px; }
.dim > .caret { color: #999; }

.propbar { flex: none; height: 39px; display: flex; align-items: center; gap: 9px; border-bottom: 2px solid #4a4a4a; }
.layer { width: 235px; font-size: 14px; }
.propicons { width: 80px; display: flex; gap: 8px; color: #e4e4e4; margin: 0 -5px 0 -4px; }
.color { width: 262px; align-items: center; padding-left: 6px; margin-left: 9px; }
.color select { padding-left: 4px; }
.swatch { width: 14px; height: 14px; flex: none; background: #19d3dd; border: 2px solid #1d5a5e; }
.weight { width: 272px; }
.plot { width: 144px; }
.plot select { padding-left: 11px; }
.snapbar { flex: none; height: 36px; display: flex; align-items: center; border-bottom: 2px solid #484848; background: #585858; padding-bottom: 3px; }
.snapbar .i { width: 18px; height: 18px; }
.group { display: flex; gap: 10px; padding: 2px 8px 2px 4px; border-left: 1px solid #3f3f3f; }
.group.start { margin-left: -13px; padding-left: 0; border: 0; }

/* Workspace */
.work { flex: 1; min-height: 0; display: flex; }
.palette { width: 250px; flex: none; display: flex; flex-direction: column; }
.palhead { height: 24px; margin-top: 3px; background: #4f4f4f; }
.paltools { height: 41px; display: flex; align-items: center; justify-content: flex-end; gap: 14px; padding-right: 7px; color: #e2e2e2; }
.help { width: 18px; height: 18px; border: 0; background: #f2f2f2; color: #333; font-weight: 700; line-height: 18px; }
.viewsel { height: 24px; background: linear-gradient(#f4f4f4, #cfcfcf); font-size: 13px; }
.tree { height: 344px; margin-top: 5px; border-top: 2px solid #404040; background: #fff; color: #333; display: flex; justify-content: space-between; }
.tree ul { display: grid; grid-template-rows: repeat(13, 1fr); height: 333px; font-size: 13px; line-height: 26px; }
.scroll { width: 22px; background: #efefef; color: #444; display: flex; flex-direction: column; align-items: center; padding: 9px 4px 10px 0; }
.scroll .up { transform: rotate(180deg); }
.thumb { width: 18px; height: 108px; margin: 8px 0 auto; border: 1px solid #999; background: linear-gradient(90deg, #f5f5f5, #cfcfcf); display: flex; align-items: center; justify-content: center; }
.thumb i { width: 6px; height: 11px; background: repeating-linear-gradient(#888 0 2px, #bbb 2px 3px); }
.palfoot { flex: 1; margin-top: 10px; border-top: 2px solid #777; }
.vtabs { width: 28px; flex: none; padding-top: 30px; display: flex; flex-direction: column; }
.vtabs button { width: 24px; height: 128px; flex: none; border: 0; border-bottom: 2px solid #3e3e3e; border-right: 1px solid #444; background: #4f4f4f; color: #8e8e8e; writing-mode: vertical-rl; transform: rotate(180deg); text-align: center; }
.vtabs .on { background: #5c5c5c; color: #d5d5d5; }
.right { flex: 1; min-width: 0; display: flex; flex-direction: column; }
.stage { flex: 1; min-height: 0; display: flex; }
.toolcol { width: 31px; margin-right: 3px; flex: none; display: flex; flex-direction: column; align-items: center; gap: 8px; padding-top: 15px; overflow: hidden; background: #555; border: solid #424242; border-width: 1px 1px 0; }
.canvas { flex: 1; position: relative; overflow: hidden; background: #202731; border-left: 2px solid #33383e; }
.drawing { display: block; width: 100%; height: 100%; }
.viewlabel { position: absolute; left: 4px; top: 7px; font-size: 14px; font-weight: 600; color: #c4c6c8; }
.station { font: 16px "Liberation Sans", sans-serif; }
.caption { font: 700 58px "DejaVu Sans", sans-serif; fill: #fff; stroke: #111; stroke-width: 2px; }
.cmdline { height: 59px; flex: none; display: flex; overflow: hidden; background: #c9c9c9; border-top: 2px solid #777; }
.cmdgrip { width: 28px; flex: none; display: flex; flex-direction: column; align-items: center; gap: 10px; background: #777; }
.cmdgrip i { width: 22px; height: 12px; background: repeating-linear-gradient(#aaa 0 2px, #888 2px 4px); }
.cmdline pre { padding: 3px; font: 14px/19px "DejaVu Sans Mono", monospace; color: #333; }

/* Dialog window */
.dialog {
  position: absolute; left: 490px; top: 34px; width: 348px; padding: 0 9px 9px;
  font: 13px/18px "DejaVu Sans Condensed", "DejaVu Sans", sans-serif; color: #3a3a3a;
  background: linear-gradient(#a2bbdc, #b9d0ea 37px, #c3d9ee 50%, #b8d5ec);
  border: 1px solid #33536e; border-radius: 7px 7px 0 0;
  box-shadow: inset 0 0 0 1px #e0effa;
}
.titlebar { height: 37px; display: flex; align-items: center; gap: 5px; padding: 6px 0 0 2px; }
.titlebar h1 { flex: 1; color: #1d3651; font-size: 14px; }
.close { width: 39px; height: 23px; display: flex; align-items: center; justify-content: center; border: 1px solid #6e2b2b; border-radius: 3px; background: linear-gradient(#e9a795, #d4715a 48%, #c0391c 50%, #d7694c); margin-bottom: 2px; }
.body { height: 536px; background: #f0f0f0; padding: 11px 14px 0; display: flex; flex-direction: column; gap: 12px; }
.field { display: flex; flex-direction: column; }
.field label { height: 21px; padding-top: 1px; }
.row { display: flex; gap: 10px; position: relative; }
.row > input, .row > .combo { flex: 1; min-width: 0; height: 26px; border: 0; border-top: 1px solid #d4d4d4; background: #fff; }
.row > input { padding: 0 5px 2px; }
.field textarea { height: 58px; resize: none; border: 0; border-top: 2px solid #d4d4d4; background: #fff; }
.lead { position: absolute; left: 3px; top: 1px; width: 22px; height: 22px; pointer-events: none; }
.row .combo select { padding: 0 26px 1px 28px; }
.sq, .split { height: 26px; border: 1px solid #8e9193; border-radius: 3px; background: linear-gradient(#f2f2f2, #cfd1d2); }
.sq { width: 27px; display: flex; align-items: center; justify-content: center; }
.sq svg, .split button:first-child svg { width: 22px; height: 22px; flex: none; }
.split { width: 45px; display: flex; }
.split button { flex: 1; border: 0; background: none; display: flex; align-items: center; justify-content: center; color: #111; }
.split button:first-child { flex: none; width: 26px; border-right: 1px solid #b5b7b9; }
.parts { margin-bottom: -3px; }
.wide { width: 197px; height: 27px; margin-top: 9px; border: 1px solid #909090; border-radius: 3px; background: linear-gradient(#f2f2f2 50%, #dcdcdc 52%, #d0d0d0); }
.row > .open { border-top: 1px solid #6c9cc3; }
.arrow { width: 20px; flex: none; display: flex; align-items: center; justify-content: center; border: 1px solid #5a91b8; background: linear-gradient(#e3f3fc, #9fd3f0); color: #111; }
.grip { position: absolute; right: 8px; bottom: 7px; }
.menu {
  position: absolute; left: 0; right: -1px; top: 25px; height: 140px; padding: 0 0 0 26px;
  display: grid; grid-template-rows: repeat(5, 1fr); align-content: start; padding-bottom: 35px;
  background: #fff; border: 1px solid #7d8083; color: #2f2f2f;
}
.menu::before { content: ""; position: absolute; left: 14px; top: 10px; height: 83px; border-left: 1px solid #b4b4b4; }
.menu li { position: relative; line-height: 20px; display: flex; align-items: center; gap: 3px; white-space: nowrap; }
.menu li::before { content: ""; position: absolute; left: -12px; top: 10px; width: 14px; border-top: 1px solid #b4b4b4; }
.menu svg { width: 22px; height: 20px; flex: none; position: relative; }
.menu .none { padding-left: 27px; }
.menu [aria-selected] span { background: #3186e2; color: #dceaff; box-shadow: 0 0 0 1px #3186e2; line-height: 18px; }

/* Mouse highlight and pointer */
.halo { position: absolute; left: 639px; top: 562px; width: 107px; height: 109px; border-radius: 50%; background: radial-gradient(closest-side, #fff56e 94%, #fff9a8); mix-blend-mode: multiply; }
.pointer { position: absolute; left: 692px; top: 617px; }
```
